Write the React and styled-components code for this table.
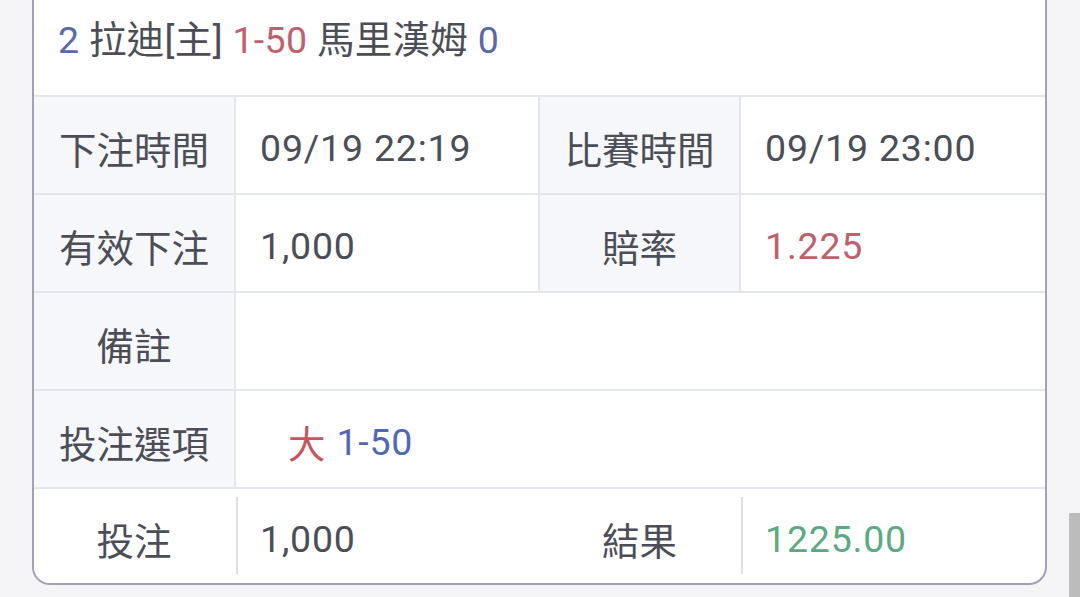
import React from "react";
import styled, { createGlobalStyle } from "styled-components";

const Global = createGlobalStyle`
  html, body { margin: 0; padding: 0; background: #f5f5f7; overflow: hidden; }
  body { font-family: Roboto, "Noto Sans CJK TC", sans-serif; }
`;

const Page = styled.div`
  width: 1080px;
  height: 597px;
  padding-left: 32px;
  box-sizing: border-box;
`;

const Card = styled.div`
  width: 1015px;
  box-sizing: border-box;
  background: #fff;
  border: 2px solid #9fa2b8;
  border-top: none;
  border-radius: 0 0 18px 18px;
  overflow: hidden;
`;

const Header = styled.div`
  height: 97px;
  box-sizing: border-box;
  padding: 18px 0 0 24px;
  font-size: 37.5px;
  letter-spacing: 0.3px;
  color: #4b4e57;
  border-bottom: 2px solid #e4e6ee;
  line-height: 44px;
`;

const C = styled.span`
  color: ${(p) => p.$c};
`;

const Row = styled.div`
  display: grid;
  grid-template-columns: 202px 304px 201px 1fr;
  height: ${(p) => (p.$last ? "94px" : "98px")};
  box-sizing: border-box;
  border-bottom: ${(p) => (p.$last ? "none" : "2px solid #e4e6ee")};
  font-size: 37.5px;
  color: #4b4e57;
`;

const Label = styled.div`
  display: flex;
  align-items: center;
  justify-content: center;
  background: ${(p) => (p.$plain ? "#fff" : "#f6f7fb")};
  border-right: 2px solid ${(p) => (p.$plain ? "transparent" : "#e4e6ee")};
  padding-top: 4px;
`;

const Value = styled.div`
  display: flex;
  align-items: center;
  padding-left: ${(p) => p.$indent || 24}px;
  grid-column: ${(p) => (p.$span ? "span 3" : "auto")};
  border-right: ${(p) => (p.$div ? "2px solid #e4e6ee" : "none")};
  color: ${(p) => p.$c || "#4b4e57"};
  letter-spacing: 0.8px;
  padding-top: 5px;
  position: relative;
`;

const BottomValue = styled(Value)`
  &::before {
    content: "";
    position: absolute;
    left: 0;
    top: 8px;
    bottom: 9px;
    width: 2px;
    background: #dedfe3;
  }
`;

const Scrollbar = styled.div`
  position: fixed;
  right: 0;
  top: 513px;
  width: 11px;
  bottom: 0;
  background: #bcbcbc;
`;

export default function App() {
  return (
    <Page>
      <Global />
      <Card>
        <Header>
          <C $c="#5a6aa8">2</C> 拉迪[主] <C $c="#c0606c">1-50</C> 馬里漢姆{" "}
          <C $c="#5a6aa8">0</C>
        </Header>
        <Row>
          <Label>下注時間</Label>
          <Value $div>09/19 22:19</Value>
          <Label>比賽時間</Label>
          <Value>09/19 23:00</Value>
        </Row>
        <Row>
          <Label>有效下注</Label>
          <Value $div>1,000</Value>
          <Label>賠率</Label>
          <Value $c="#c0606c">1.225</Value>
        </Row>
        <Row>
          <Label>備註</Label>
          <Value $span />
        </Row>
        <Row>
          <Label>投注選項</Label>
          <Value $span $indent={52}>
            <C $c="#c9545e">大</C>&nbsp;<C $c="#5068b8">1-50</C>
          </Value>
        </Row>
        <Row $last>
          <Label $plain>投注</Label>
          <BottomValue>1,000</BottomValue>
          <Label $plain>結果</Label>
          <BottomValue $c="#5aaa82">1225.00</BottomValue>
        </Row>
      </Card>
      <Scrollbar />
    </Page>
  );
}
